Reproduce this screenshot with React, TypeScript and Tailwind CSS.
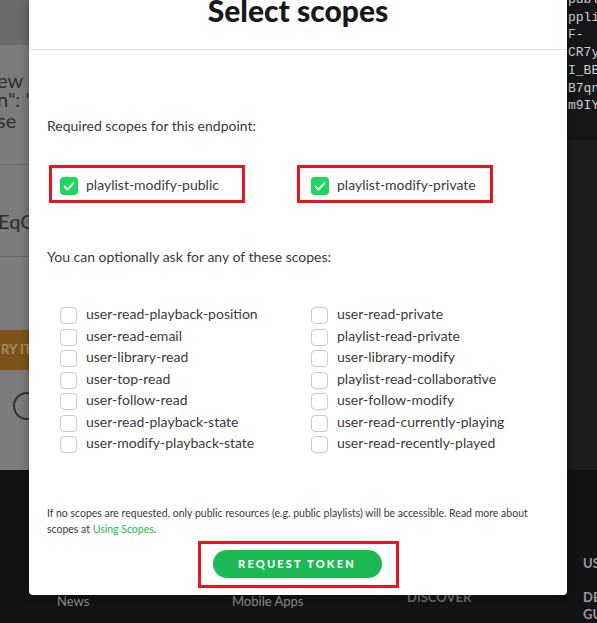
const required = ['playlist-modify-public', 'playlist-modify-private']

const leftScopes = [
  'user-read-playback-position',
  'user-read-email',
  'user-library-read',
  'user-top-read',
  'user-follow-read',
  'user-read-playback-state',
  'user-modify-playback-state',
]

const rightScopes = [
  'user-read-private',
  'playlist-read-private',
  'user-library-modify',
  'playlist-read-collaborative',
  'user-follow-modify',
  'user-read-currently-playing',
  'user-read-recently-played',
]

const tokenLines = ['publi', 'pplic', 'F-', 'CR7yV', 'I_BBi', 'B7qnT', 'm9IYb']

function CheckedBox() {
  return (
    <span className="mt-[3px] grid size-[18px] shrink-0 place-items-center rounded-[4px] bg-[#1ed760]">
      <svg viewBox="0 0 18 18" className="size-[18px]" fill="none">
        <path d="M4.6 9.6l2.9 3 5.9-6.4" stroke="white" strokeWidth="2" strokeLinecap="round" strokeLinejoin="round" />
      </svg>
    </span>
  )
}

function ScopeRow({ name }: { name: string }) {
  return (
    <label className="flex h-[21.5px] items-center gap-[9px]">
      <span className="mt-[4px] size-[17px] shrink-0 rounded-[4px] border border-[#c9c9c9] bg-white" />
      <span className="whitespace-nowrap">{name}</span>
    </label>
  )
}

function PageBehind() {
  return (
    <div className="flex h-full flex-col">
      <div className="flex h-[470px]">
        <div className="relative w-[29px] overflow-hidden bg-[#7c7c7c] text-[#2f2f2f]">
          <div className="h-[45px] bg-[#6b6b6b]" />
          <div className="-ml-[3px] mt-[26px] whitespace-nowrap text-[20px] leading-[19px]">
            <p>ew P</p>
            <p>n": "N</p>
            <p className="mt-[2px]">se</p>
          </div>
          <div className="mt-[34px] h-px bg-[#6a6a6a]" />
          <p className="mt-[47px] -ml-[2px] whitespace-nowrap text-[20px] leading-[19px]">EqC</p>
          <div className="mt-[-9px] h-px bg-[#6a6a6a]" />
          <div className="mt-[33px] h-px bg-[#6a6a6a]" />
          <div className="mt-[73px] flex h-[40px] items-center bg-[#7d5318] pl-[1px]">
            <span className="whitespace-nowrap text-[13px] font-bold text-[#a58b66]">RY IT'</span>
          </div>
          <div className="ml-[13px] mt-[22px] size-[28px] rounded-full border-2 border-[#333]" />
        </div>
        <div className="flex-1 bg-[#7c7c7c]" />
        <div className="flex w-[30px] flex-col overflow-hidden">
          <div className="h-[140px] bg-[#141617] pl-[1px] font-['Liberation_Mono',monospace] text-[13px] leading-[17.7px] text-[#d0d0d0]">
            <div className="-mt-[9px]">
              {tokenLines.map((line) => (
                <p key={line} className="whitespace-nowrap">{line}</p>
              ))}
            </div>
          </div>
          <div className="flex-1 bg-[#1b1d1e]" />
        </div>
      </div>
      <footer className="flex flex-1 overflow-hidden bg-[#121314] pl-[57px] text-[13px]">
        <div className="w-[175px] shrink-0 pt-[122px] leading-[18px] text-[#8a8a8a]">News</div>
        <div className="w-[175px] shrink-0 pt-[122px] leading-[18px] text-[#8a8a8a]">Mobile Apps</div>
        <div className="w-[176px] shrink-0 pt-[118px] font-bold leading-[18px] text-[#696969]">DISCOVER</div>
        <div className="shrink-0 pt-[85px] font-bold leading-[17px] text-[#9a9a9a]">
          <p className="whitespace-nowrap">USEFUL</p>
          <p className="mt-[17px] whitespace-nowrap">DEVELOPER</p>
          <p className="whitespace-nowrap">GUIDES</p>
        </div>
      </footer>
    </div>
  )
}

export default function App() {
  return (
    <div className="relative h-[623px] w-[597px] overflow-hidden font-['Lato',sans-serif]">
      <PageBehind />

      <div className="absolute left-[29px] top-0 flex h-[595px] w-[538px] flex-col rounded-b-[4px] bg-white text-[14px] text-[#3a3a3a] shadow-[0_0_10px_rgba(0,0,0,0.35)]">
        <header className="h-[50px] border-b border-[#e3e3e3]">
          <h1 className="-mt-[5px] text-center text-[30px] font-black leading-[30px] text-[#191919]">Select scopes</h1>
        </header>

        <div className="px-[18px]">
          <p className="mt-[66px] leading-[20px]">Required scopes for this endpoint:</p>

          <div className="mt-[29px] flex">
            <div className="ml-[2px] flex h-[38px] w-[196px] items-center gap-[8px] border-[3px] border-[#e8151f] pl-[8px]">
              <CheckedBox />
              <span>{required[0]}</span>
            </div>
            <div className="ml-[52px] flex h-[38px] w-[196px] items-center gap-[8px] border-[3px] border-[#e8151f] pl-[11px]">
              <CheckedBox />
              <span>{required[1]}</span>
            </div>
          </div>

          <p className="mt-[44px] leading-[20px]">You can optionally ask for any of these scopes:</p>

          <div className="ml-[13px] mt-[36px] grid grid-cols-[251px_1fr]">
            <div>
              {leftScopes.map((s) => (
                <ScopeRow key={s} name={s} />
              ))}
            </div>
            <div>
              {rightScopes.map((s) => (
                <ScopeRow key={s} name={s} />
              ))}
            </div>
          </div>

          <p className="mt-[51px] text-[10.5px] leading-[16px]">
            If no scopes are requested, only public resources (e.g. public playlists) will be accessible. Read more about scopes at{' '}
            <a className="text-[#1db954]">Using Scopes</a>.
          </p>
        </div>

        <div className="mt-[4px] flex justify-center">
          <div className="flex h-[47px] w-[201px] items-center justify-center border-[3px] border-[#e8151f] pr-[2px]">
            <button className="h-[28px] w-[169px] rounded-full bg-[#1db954] text-[11px] font-black tracking-[2.2px] text-white">
              REQUEST TOKEN
            </button>
          </div>
        </div>
      </div>
    </div>
  )
}
